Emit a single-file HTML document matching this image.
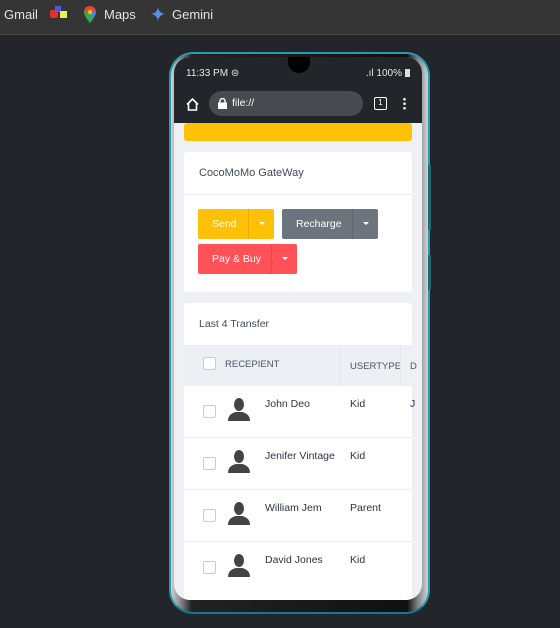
<!DOCTYPE html>
<html><head><style>
*{margin:0;padding:0;box-sizing:border-box}
body{width:560px;height:628px;background:#222529;font-family:"Liberation Sans",sans-serif;position:relative;overflow:hidden}
.top{position:absolute;left:0;top:0;width:560px;height:35px;background:#353535;border-bottom:1px solid #4a4a4a;color:#e3e3e3;font-size:13px}
.top span{position:absolute;top:7px}
.phone{position:absolute;left:169px;top:52px;width:261px;height:562px;border-radius:24px;background:linear-gradient(90deg,#cfd3d6,#7e8386 4%,#222 8%,#111 92%,#7e8386 96%,#cfd3d6);border:2px solid #2a9ab0;border-bottom-color:#167a8e}
.screen{position:absolute;left:174px;top:57px;width:248px;height:543px;border-radius:16px;background:#eef0f3;overflow:hidden}
.sb{position:absolute;left:0;top:0;width:248px;height:31px;background:#222529;color:#e8e8e8;font-size:10px}
.url{position:absolute;left:0;top:31px;width:248px;height:35px;background:#222529}
.pill{position:absolute;left:35px;top:3px;width:154px;height:25px;border-radius:13px;background:#474b50;color:#fff;font-size:10.5px}
.card{position:absolute;left:10px;width:228px;background:#fff;border-radius:3px}
.btn{position:absolute;height:30px;color:#fff;font-size:10.5px;line-height:30px;border-radius:2px}
.btn i{position:absolute;top:0;right:0;width:26px;height:30px;border-left:1px solid rgba(0,0,0,.1)}
.btn i:after{content:"";position:absolute;left:10px;top:13px;border:3px solid transparent;border-top:3px solid #fff}
.row{position:absolute;left:0;width:228px;height:52px;border-top:1px solid #eceef1;font-size:10.5px;color:#2d3340}
.cb{position:absolute;left:19px;width:13px;height:13px;border:1px solid #ccc;border-radius:2px;background:#fff}
.av{position:absolute;left:43px;top:11px}
.nm{position:absolute;left:81px;top:12px}
.ty{position:absolute;left:166px;top:12px}
</style></head><body>
<div class="top">
<span style="left:4px">Gmail</span>
<span style="left:50px;top:10px;width:8px;height:8px;background:#d33;border-radius:2px"></span>
<span style="left:55px;top:6px;width:6px;height:6px;background:#55d"></span>
<span style="left:60px;top:11px;width:7px;height:7px;background:#ee5"></span>
<svg style="position:absolute;left:84px;top:6px" width="12" height="17" viewBox="0 0 12 17"><path d="M6 0a6 6 0 0 0-6 6c0 4 6 11 6 11s6-7 6-11a6 6 0 0 0-6-6z" fill="#34a853"/><path d="M6 0a6 6 0 0 0-6 6h12a6 6 0 0 0-6-6z" fill="#ea4335"/><path d="M12 6c0 2-2 5-3 7L6 6z" fill="#4285f4"/><circle cx="6" cy="6" r="2.2" fill="#fbbc04"/></svg>
<span style="left:104px">Maps</span>
<svg style="position:absolute;left:151px;top:7px" width="14" height="14" viewBox="0 0 14 14"><path d="M7 0C7.5 4 10 6.5 14 7 10 7.5 7.5 10 7 14 6.5 10 4 7.5 0 7 4 6.5 6.5 4 7 0z" fill="#5b8def"/></svg>
<span style="left:172px">Gemini</span>
</div>
<div class="phone"></div>
<div style="position:absolute;left:428px;top:165px;width:3px;height:65px;background:#1e6a7a"></div>
<div style="position:absolute;left:428px;top:255px;width:3px;height:35px;background:#1e6a7a"></div>
<div class="screen">
<div class="sb"><span style="position:absolute;left:12px;top:11px">11:33 PM ⊜</span>
<div style="position:absolute;left:114px;top:0;width:22px;height:16px;background:#000;border-radius:0 0 11px 11px"></div>
<span style="position:absolute;right:20px;top:11px">.ıl 100%</span><span style="position:absolute;right:12px;top:12px;width:5px;height:8px;background:#ddd"></span></div>
<div class="url">
<svg style="position:absolute;left:11px;top:9px" width="15" height="15" viewBox="0 0 15 15"><path d="M2 7.5L7.5 2 13 7.5M3.5 6v7h8V6" fill="none" stroke="#fff" stroke-width="1.6"/></svg>
<div class="pill"><svg style="position:absolute;left:9px;top:7px" width="9" height="11" viewBox="0 0 9 11"><rect x="0" y="4.5" width="9" height="6.5" fill="#fff"/><path d="M2 5V3a2.5 2.5 0 0 1 5 0v2" fill="none" stroke="#fff" stroke-width="1.4"/></svg><span style="position:absolute;left:23px;top:6px">file://</span></div>
<div style="position:absolute;left:200px;top:9px;width:13px;height:13px;border:1.5px solid #fff;border-radius:2px;color:#fff;font-size:8px;text-align:center;line-height:10px">1</div>
<div style="position:absolute;left:229px;top:9px;width:3px;height:13px;background:radial-gradient(circle,#fff 1.2px,transparent 1.4px) 0 0/3px 4.5px"></div>
</div>
<div class="card" style="top:66px;height:18px;background:#ffc107"></div>
<div class="card" style="top:95px;height:140px">
<div style="position:absolute;left:15px;top:15px;font-size:11px;color:#3f4a5a">CocoMoMo GateWay</div>
<div style="position:absolute;left:0;top:42px;width:228px;height:1px;background:#eceef1"></div>
<div class="btn" style="left:14px;top:57px;width:76px;background:#ffc107"><span style="margin-left:14px">Send</span><i></i></div>
<div class="btn" style="left:98px;top:57px;width:96px;background:#6c757d"><span style="margin-left:14px">Recharge</span><i></i></div>
<div class="btn" style="left:14px;top:92px;width:99px;background:#ff5258"><span style="margin-left:14px">Pay &amp; Buy</span><i></i></div>
</div>
<div class="card" style="top:246px;height:300px">
<div style="position:absolute;left:15px;top:15px;font-size:10.5px;color:#3f4a5a">Last 4 Transfer</div>
<div style="position:absolute;left:0;top:42px;width:228px;height:40px;background:#eceff3;font-size:9.5px;color:#4a5568">
<div class="cb" style="top:12px"></div>
<span style="position:absolute;left:41px;top:14px">RECEPIENT</span>
<div style="position:absolute;left:156px;top:0;width:1px;height:40px;background:#e2e5ea"></div>
<span style="position:absolute;left:166px;top:16px">USERTYPE</span>
<div style="position:absolute;left:216px;top:0;width:1px;height:40px;background:#e2e5ea"></div>
<span style="position:absolute;left:226px;top:16px">D</span>
</div>
<div class="row" style="top:82px"><div class="cb" style="top:19px"></div><svg class="av" width="24" height="24" viewBox="0 0 24 24"><ellipse cx="12" cy="7.5" rx="5" ry="6.5" fill="#444"/><path d="M1 24c0-6 4-8 8-9h6c4 1 8 3 8 9z" fill="#444"/></svg><span class="nm">John Deo</span><span class="ty">Kid</span><span class="ty" style="left:226px">J</span></div>
<div class="row" style="top:134px"><div class="cb" style="top:19px"></div><svg class="av" width="24" height="24" viewBox="0 0 24 24"><ellipse cx="12" cy="7.5" rx="5" ry="6.5" fill="#444"/><path d="M1 24c0-6 4-8 8-9h6c4 1 8 3 8 9z" fill="#444"/></svg><span class="nm">Jenifer Vintage</span><span class="ty">Kid</span></div>
<div class="row" style="top:186px"><div class="cb" style="top:19px"></div><svg class="av" width="24" height="24" viewBox="0 0 24 24"><ellipse cx="12" cy="7.5" rx="5" ry="6.5" fill="#444"/><path d="M1 24c0-6 4-8 8-9h6c4 1 8 3 8 9z" fill="#444"/></svg><span class="nm">William Jem</span><span class="ty">Parent</span></div>
<div class="row" style="top:238px"><div class="cb" style="top:19px"></div><svg class="av" width="24" height="24" viewBox="0 0 24 24"><ellipse cx="12" cy="7.5" rx="5" ry="6.5" fill="#444"/><path d="M1 24c0-6 4-8 8-9h6c4 1 8 3 8 9z" fill="#444"/></svg><span class="nm">David Jones</span><span class="ty">Kid</span></div>
</div>
</div>
</body></html>
